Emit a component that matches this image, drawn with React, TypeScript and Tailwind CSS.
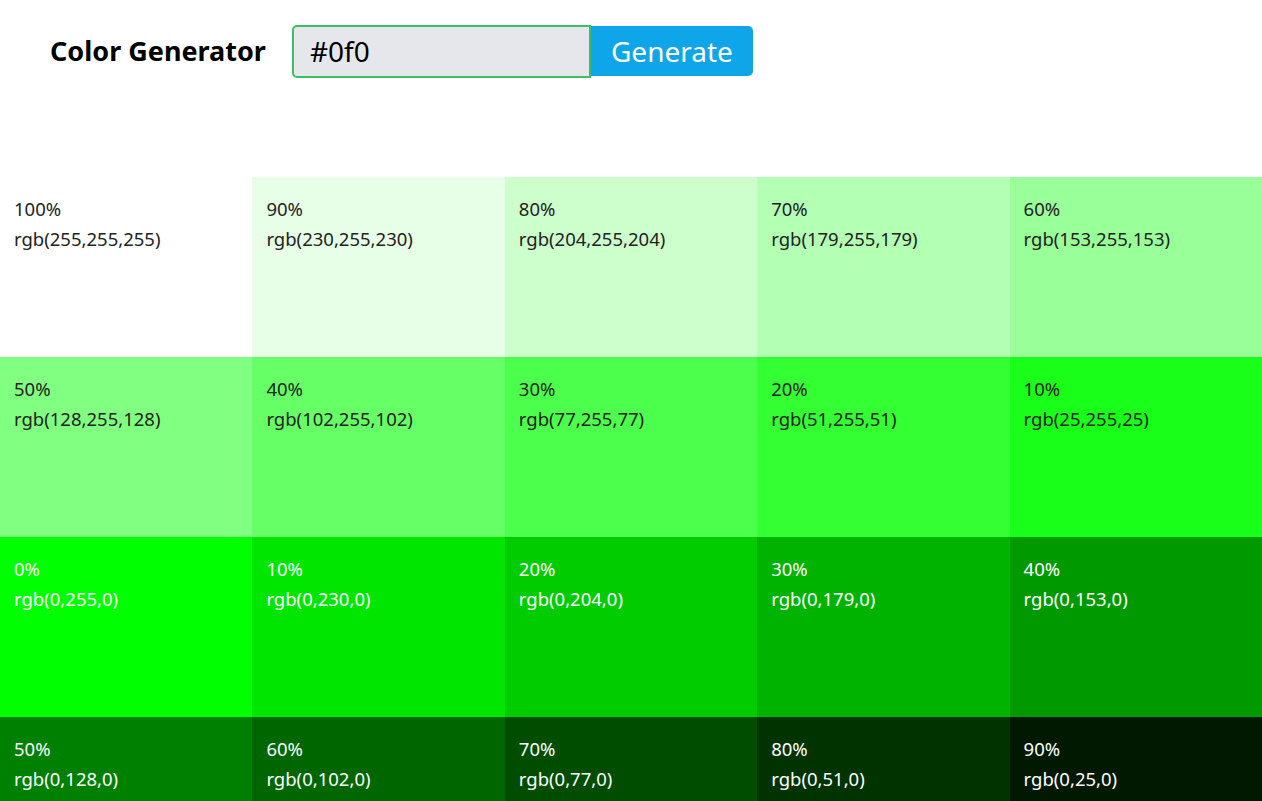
import { useState } from "react";

type Swatch = { weight: number; rgb: [number, number, number]; dark: boolean };

const tints: Swatch[] = [
  { weight: 100, rgb: [255, 255, 255], dark: false },
  { weight: 90, rgb: [230, 255, 230], dark: false },
  { weight: 80, rgb: [204, 255, 204], dark: false },
  { weight: 70, rgb: [179, 255, 179], dark: false },
  { weight: 60, rgb: [153, 255, 153], dark: false },
  { weight: 50, rgb: [128, 255, 128], dark: false },
  { weight: 40, rgb: [102, 255, 102], dark: false },
  { weight: 30, rgb: [77, 255, 77], dark: false },
  { weight: 20, rgb: [51, 255, 51], dark: false },
  { weight: 10, rgb: [25, 255, 25], dark: false },
];

const shades: Swatch[] = [255, 230, 204, 179, 153, 128, 102, 77, 51, 25].map((g, i) => ({
  weight: i * 10,
  rgb: [0, g, 0] as [number, number, number],
  dark: true,
}));

const swatches = [...tints, ...shades];

function SingleColor({ weight, rgb, dark }: Swatch) {
  const value = `rgb(${rgb.join(",")})`;
  return (
    <div
      className={`h-[180px] px-[14px] pt-[17px] text-[18.5px] leading-[30px] ${
        dark ? "text-white" : "text-[#222]"
      }`}
      style={{ backgroundColor: value }}
    >
      <p>{weight}%</p>
      <p>{value}</p>
    </div>
  );
}

export default function App() {
  const [color, setColor] = useState("#0f0");

  return (
    <main className="min-h-screen bg-white font-['Noto_Sans','Open_Sans',sans-serif]">
      <section className="flex items-center h-[102px] pl-[50px]">
        <h3 className="text-[27px] font-bold text-black mr-[26px]">Color Generator</h3>
        <form className="flex items-center" onSubmit={(e) => e.preventDefault()}>
          <input
            type="text"
            value={color}
            onChange={(e) => setColor(e.target.value)}
            className="w-[299px] h-[53px] bg-[#e5e7eb] border-2 border-[#3cbf64] rounded-l-[5px] px-4 text-[28px] text-black outline-none"
          />
          <button
            type="submit"
            className="h-[50px] w-[162px] bg-[#0ea5e9] text-white text-[28px] rounded-r-[5px]"
          >
            Generate
          </button>
        </form>
      </section>
      <section className="grid grid-cols-5 mt-[75px]">
        {swatches.map((s, i) => (
          <SingleColor key={i} {...s} />
        ))}
      </section>
    </main>
  );
}
